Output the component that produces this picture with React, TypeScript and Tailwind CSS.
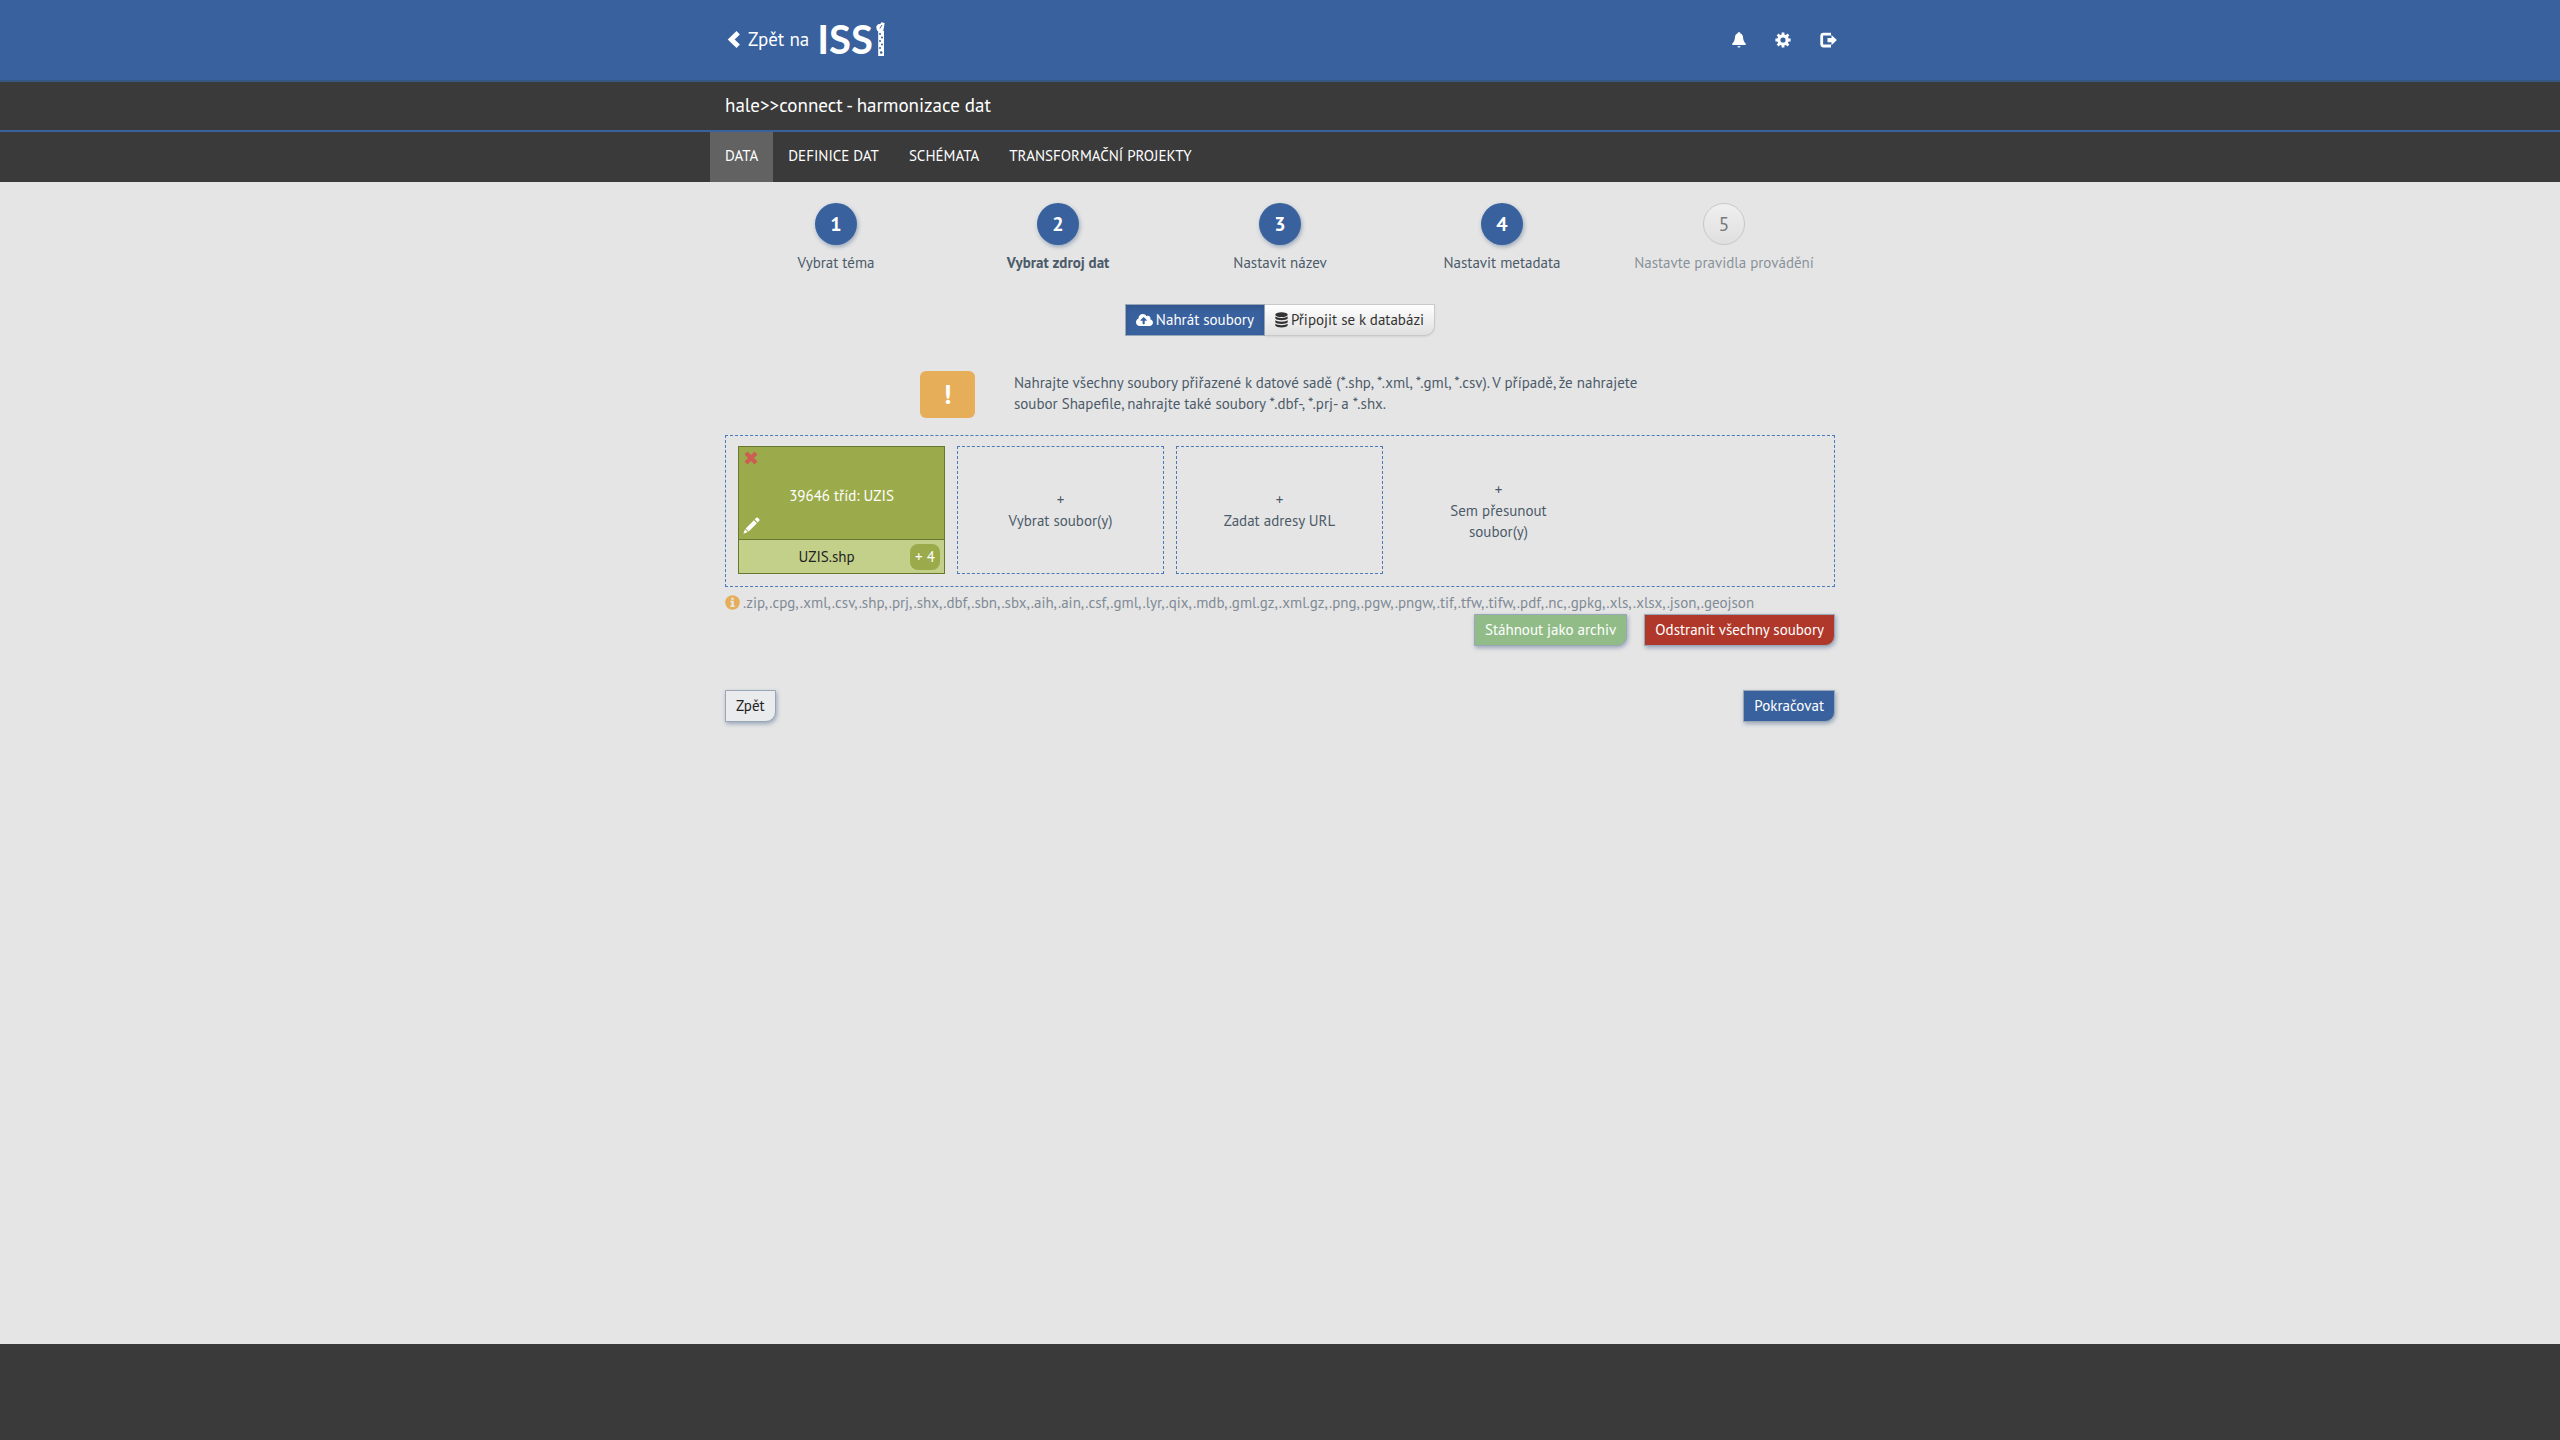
import React from 'react'
import { FaCloudUploadAlt } from 'react-icons/fa'

const navItems = ['DATA', 'DEFINICE DAT', 'SCHÉMATA', 'TRANSFORMAČNÍ PROJEKTY']

const steps = ['Vybrat téma', 'Vybrat zdroj dat', 'Nastavit název', 'Nastavit metadata', 'Nastavte pravidla provádění']

const fileTypes =
  '.zip,.cpg,.xml,.csv,.shp,.prj,.shx,.dbf,.sbn,.sbx,.aih,.ain,.csf,.gml,.lyr,.qix,.mdb,.gml.gz,.xml.gz,.png,.pgw,.pngw,.tif,.tfw,.tifw,.pdf,.nc,.gpkg,.xls,.xlsx,.json,.geojson'

const btn = 'h-8 border border-[#98a6b5] rounded-br-[10px] px-2.5 pb-0.5 shadow-[1px_2px_4px_rgba(60,90,130,0.45)]'

function ChevronIcon() {
  return (
    <svg viewBox="0 0 13 17" className="w-[13px] h-[17px]" fill="none" stroke="currentColor" strokeWidth="4.8">
      <path d="M11.2 1.8 4.2 8.5l7 6.7" />
    </svg>
  )
}

function TowerLogo() {
  return (
    <svg viewBox="0 0 9 34" className="w-[9px] h-[34px] ml-[3px]">
      <path d="M.2 4.5 2 2.2 4.2 2 5.5.3 8.6 1 8 5 7.2 9H8v25H2.2V9.5L.8 8z" fill="currentColor" />
      <path d="m6 3-2.200 3.500" stroke="#38619e" strokeWidth="1" />
      <g fill="#38619e">
        <circle cx="4" cy="12" r="1" />
        <circle cx="6" cy="15.5" r="1" />
        <circle cx="4" cy="19" r="1" />
        <circle cx="6" cy="22.5" r="1" />
        <circle cx="4" cy="26" r="1" />
        <circle cx="5.2" cy="30.5" r="1.3" />
      </g>
    </svg>
  )
}

function BellIcon() {
  return (
    <svg viewBox="0 0 14 16" className="w-3.5 h-4" fill="currentColor">
      <path d="M7 .3c.9 0 1.4.5 1.5 1.200C10 2 10.800 3.300 11 5c.2 2.800.9 4.800 2.700 6.500V13H.3v-1.500C2.100 9.800 2.800 7.800 3 5c.2-1.700 1-3 2.500-3.500C5.600.8 6.100.3 7 .3z" />
      <path d="M5.3 14.200h3.400c-.3.900-.9 1.300-1.700 1.300s-1.400-.4-1.700-1.300z" />
    </svg>
  )
}

function CogIcon() {
  return (
    <svg viewBox="0 0 16 16" className="w-4 h-4">
      <circle cx="8" cy="8" r="4.2" fill="none" stroke="currentColor" strokeWidth="3.2" />
      <path
        d="M8 .4v3M8 12.600v3M.4 8h3M12.600 8h3M2.600 2.600l2 2M11.400 11.400l2 2M2.600 13.400l2-2M11.400 4.600l2-2"
        stroke="currentColor"
        strokeWidth="2.8"
      />
    </svg>
  )
}

function LogoutIcon() {
  return (
    <svg viewBox="0 0 17 16" className="w-[17px] h-4">
      <path d="M11 2.200H3.500C2.300 2.200 1.700 3 1.700 4.200v7.600c0 1.200.6 2.200 1.800 2.200H11" fill="none" stroke="currentColor" strokeWidth="2.8" />
      <path d="M7.500 6h4V3l5.400 5.100-5.400 5.100v-3h-4z" fill="currentColor" />
    </svg>
  )
}

function DatabaseIcon() {
  return (
    <svg viewBox="0 0 13 16" className="w-[13px] h-4" fill="currentColor">
      <ellipse cx="6.5" cy="2.7" rx="6.2" ry="2.4" />
      <path d="M.3 4.600c1.600 1.900 10.800 1.900 12.400 0v2c-1 2.300-11.400 2.300-12.400 0z" />
      <path d="M.3 8.200c1.600 1.900 10.800 1.900 12.400 0v2c-1 2.300-11.400 2.300-12.400 0z" />
      <path d="M.3 11.800c1.600 1.900 10.800 1.900 12.400 0v1.700c-1 2.500-11.400 2.500-12.400 0z" />
    </svg>
  )
}

function PencilIcon() {
  return (
    <svg viewBox="0 0 17 17" className="w-[17px] h-[17px]" fill="currentColor">
      <path d="M13.300.8c.5-.5 1-.5 1.500 0l1.500 1.500c.5.5.5 1 0 1.500l-1.600 1.600-3-3z" />
      <path d="m10.900 3.200 3 3-8.200 8.200-3-3z" />
      <path d="m2 12.200 2.900 2.900L.4 16.700z" />
    </svg>
  )
}

function RemoveIcon() {
  return (
    <svg viewBox="0 0 14 14" className="w-3.5 h-3.5" stroke="currentColor" strokeWidth="4.2">
      <path d="m2 2 10 10M12 2 2 12" />
    </svg>
  )
}

function InfoIcon() {
  return (
    <svg viewBox="0 0 15 15" className="w-[15px] h-[15px] shrink-0">
      <circle cx="7.5" cy="7.5" r="7.3" fill="#e6ae58" />
      <path d="M6.200 2.700h2.600v2H6.200zM5.300 5.800h3.500v4.700h1v1.500H5.300v-1.500h1V7.200h-1z" fill="#e5e5e5" />
    </svg>
  )
}

function Container({ children, className = '' }: { children: React.ReactNode; className?: string }) {
  return <div className={'w-full max-w-[1140px] mx-auto px-[15px] ' + className}>{children}</div>
}

export default function App() {
  return (
    <div className="min-h-screen flex flex-col bg-[#e5e5e5] text-[#4c5b69] text-[15px] leading-[21px] font-['PT_Sans','Lato',sans-serif]">
      {/* Top bar */}
      <header className="h-[82px] bg-[#38619e] border-b-2 border-[#345883] text-white">
        <Container className="h-full flex items-center justify-between">
          <a href="#" className="flex items-center pl-0.5 pb-0.5">
            <ChevronIcon />
            <span className="ml-2 text-[19px] leading-6">Zpět na</span>
            <span className="ml-2 font-['Lato'] font-bold text-[40px] leading-8">ISS</span>
            <TowerLogo />
          </a>
          <div className="flex items-center gap-[29px] -mr-0.5">
            <button aria-label="Upozornění"><BellIcon /></button>
            <button aria-label="Nastavení"><CogIcon /></button>
            <button aria-label="Odhlásit se"><LogoutIcon /></button>
          </div>
        </Container>
      </header>

      {/* Title */}
      <div className="h-[50px] bg-[#3a3a3a] border-b-2 border-[#38619e] text-white">
        <Container className="h-full flex items-center pb-0.5">
          <h1 className="text-[19px] leading-6">hale&gt;&gt;connect - harmonizace dat</h1>
        </Container>
      </div>

      {/* Navigation */}
      <nav className="h-[50px] bg-[#3a3a3a] text-white">
        <div className="w-full max-w-[1140px] mx-auto h-full flex">
          {navItems.map((item, i) => (
            <a key={item} href="#" className={'px-[15px] pb-[3px] flex items-center ' + (i === 0 ? 'bg-[#626262]' : '')}>
              {item}
            </a>
          ))}
        </div>
      </nav>

      <main className="flex-1">
        <Container>
          {/* Wizard steps */}
          <ol className="grid grid-cols-5 pt-[21px]">
            {steps.map((step, i) => (
              <li key={step} className={'flex flex-col items-center gap-[7px] ' + (i === 4 ? 'opacity-60' : '')}>
                <span
                  className={
                    'size-[42px] rounded-full flex items-center justify-center text-xl ' +
                    (i === 4
                      ? 'border border-[#b5b5b5] bg-linear-to-b from-[#f7f7f7] to-[#dcdcdc] text-[#333]'
                      : 'bg-[#38619e] text-white font-bold shadow-[1px_2px_4px_rgba(60,90,130,0.45)]')
                  }
                >
                  {i + 1}
                </span>
                <span className={i === 1 ? 'font-bold' : ''}>{step}</span>
              </li>
            ))}
          </ol>

          {/* Source switch */}
          <div className="flex justify-center mt-[31px]">
            <button className="h-8 px-2.5 pb-px flex items-center gap-[3px] border border-[#98a6b5] bg-[#38619e] text-white shadow-[inset_0_3px_5px_rgba(0,0,0,0.13)]">
              <FaCloudUploadAlt className="w-[17px] h-4" />
              Nahrát soubory
            </button>
            <button className="h-8 px-2.5 pb-px flex items-center gap-[3px] border border-l-0 border-[#c9c9c9] rounded-br-[10px] bg-linear-to-b from-white to-[#e0e0e0] text-[#333] shadow-[0_1px_2px_rgba(0,0,0,0.08)]">
              <DatabaseIcon />
              Připojit se k databázi
            </button>
          </div>

          {/* Hint */}
          <div className="flex items-start justify-center gap-[39px] mt-[35px]">
            <div className="w-[55px] h-[47px] rounded-md bg-[#e6ae58] text-white text-[27px] font-bold flex items-center justify-center">!</div>
            <p className="max-w-[626px] pt-px">
              Nahrajte všechny soubory přiřazené k datové sadě (*.shp, *.xml, *.gml, *.csv). V případě, že nahrajete soubor
              Shapefile, nahrajte také soubory *.dbf-, *.prj- a *.shx.
            </p>
          </div>

          {/* Drop zone */}
          <section className="flex gap-3 mt-[17px] border border-dashed border-[#4a7ab8] p-3 pt-2.5 text-center">
            <div className="w-[207px] h-32 flex flex-col border border-[#66782f]">
              <div className="relative flex-1 flex items-center justify-center pt-1 bg-[#9bab4b] text-white">
                39646 tříd: UZIS
                <button aria-label="Odebrat" className="absolute left-[5px] top-1 text-[#cd5c53]"><RemoveIcon /></button>
                <button aria-label="Upravit" className="absolute left-1 bottom-[5px]"><PencilIcon /></button>
              </div>
              <div className="h-[34px] flex items-center border-t border-[#66782f] bg-[#c3d08a] text-[#222] pl-1 pr-1">
                <span className="flex-1">UZIS.shp</span>
                <span className="w-[30px] h-[26px] rounded-lg bg-[#9bab4b] text-white flex items-center justify-center">+ 4</span>
              </div>
            </div>
            <button className="w-[207px] h-32 border border-dashed border-[#4a7ab8]">
              +<br />Vybrat soubor(y)
            </button>
            <button className="w-[207px] h-32 border border-dashed border-[#4a7ab8]">
              +<br />Zadat adresy URL
            </button>
            <div className="w-[207px] h-32 px-12 flex flex-col justify-center">
              <span>+</span>
              Sem přesunout soubor(y)
            </div>
          </section>

          <p className="mt-[5px] flex items-center gap-[3px] text-[#7f8a95]">
            <InfoIcon />
            {fileTypes}
          </p>

          <div className="flex justify-end gap-[17px] mt-px">
            <button className={btn + ' bg-[#91bc88] text-white'}>Stáhnout jako archiv</button>
            <button className={btn + ' bg-[#b0382a] text-white'}>Odstranit všechny soubory</button>
          </div>

          <div className="flex justify-between mt-11">
            <button className={btn + ' bg-[#e9ebec] text-[#222]'}>Zpět</button>
            <button className={btn + ' bg-[#38619e] text-white'}>Pokračovat</button>
          </div>
        </Container>
      </main>

      <footer className="h-24 bg-[#3a3a3a]" />
    </div>
  )
}
